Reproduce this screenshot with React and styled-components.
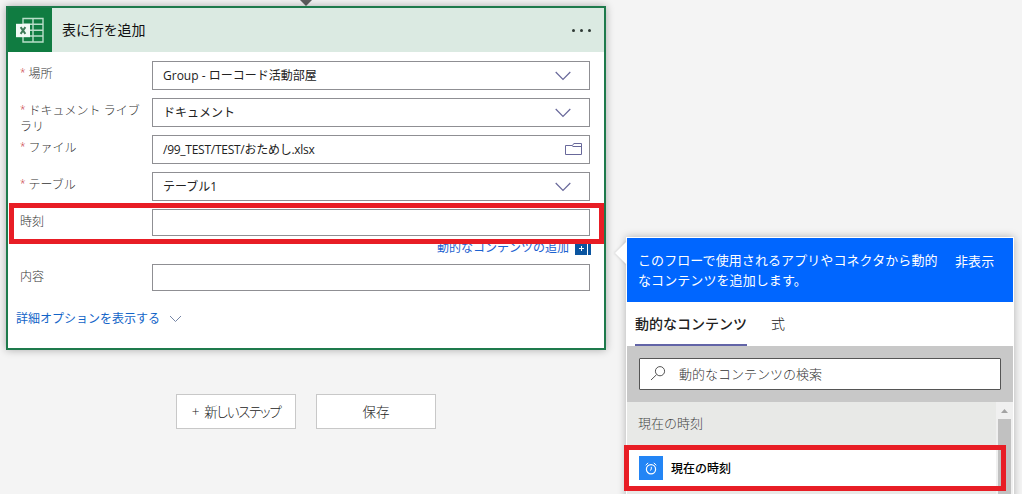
import React from 'react';
import styled, {createGlobalStyle} from 'styled-components';

const App = () => (
	<Page>
		<GlobalStyle />

		<Designer>
			<Connector width="12" height="6" viewBox="0 0 12 6">
				<path d="M0 0h12L6 6z" fill="#5f5f5f" />
			</Connector>

			<Card>
				<CardHeader>
					<ExcelTile>
						<ExcelIcon />
					</ExcelTile>
					<CardTitle>表に行を追加</CardTitle>
					<Dots>
						<Dot />
						<Dot />
						<Dot />
					</Dots>
				</CardHeader>

				<Fields>
					<Field label="場所" required>
						<Value>Group - ローコード活動部屋</Value>
						<Chevron />
					</Field>
					<Field label="ドキュメント ライブラリ" required>
						<Value>ドキュメント</Value>
						<Chevron />
					</Field>
					<Field label="ファイル" required>
						<Value $spacing={-0.26}>/99_TEST/TEST/おためし.xlsx</Value>
						<FolderIcon />
					</Field>
					<Field label="テーブル" required>
						<Value>テーブル1</Value>
						<Chevron />
					</Field>
					<Field label="時刻" highlighted />
					<DynamicLink>
						動的なコンテンツの追加
						<PlusTile>
							<svg width="12" height="12" viewBox="0 0 12 12">
								<path d="M6.5 5v5M4 7.5h5" stroke="#fff" />
							</svg>
						</PlusTile>
						<PlusEdge />
					</DynamicLink>
					<Field label="内容" />
				</Fields>

				<Advanced>
					詳細オプションを表示する
					<svg width="13" height="8" viewBox="0 0 13 8">
						<path d="M1 1l5.5 5.5L12 1" fill="none" stroke="#7585a6" />
					</svg>
				</Advanced>
			</Card>

			<Actions>
				<Action>
					+<ActionText>新しいステップ</ActionText>
				</Action>
				<Action>保存</Action>
			</Actions>
		</Designer>

		<Panel>
			<Callout width="12" height="24" viewBox="0 0 12 24">
				<path d="M12 0v24L0 12z" fill="#fff" />
			</Callout>
			<PanelHeader>
				<PanelText>このフローで使用されるアプリやコネクタから動的なコンテンツを追加します。</PanelText>
				<Hide>非表示</Hide>
			</PanelHeader>
			<Tabs>
				<Tab $active>動的なコンテンツ</Tab>
				<Tab>式</Tab>
			</Tabs>
			<SearchArea>
				<SearchBox>
					<svg width="16" height="16" viewBox="0 0 16 16">
						<path d="M1 14l5.6-5.4" fill="none" stroke="#555" />
						<circle cx="10" cy="5.2" r="4.6" fill="none" stroke="#555" />
					</svg>
					<SearchHint>動的なコンテンツの検索</SearchHint>
				</SearchBox>
			</SearchArea>
			<Results>
				<ResultList>
					<GroupTitle>現在の時刻</GroupTitle>
					<Result>
						<ClockTile>
							<ClockIcon />
						</ClockTile>
						現在の時刻
						<ResultMark />
					</Result>
				</ResultList>
				<Scrollbar>
					<svg width="7" height="4" viewBox="0 0 7 4">
						<path d="M0 4l3.5-4L7 4z" fill="#a3a3a3" />
					</svg>
					<Thumb />
				</Scrollbar>
			</Results>
		</Panel>
	</Page>
);

const Field = ({label, required, highlighted, children}) => (
	<FieldRow>
		<Label>
			{required && <Star>*</Star>}
			{label}
		</Label>
		<Box $short={!children}>{children}</Box>
		{highlighted && <FieldMark />}
	</FieldRow>
);

const Chevron = () => (
	<ChevronSvg width="16" height="10" viewBox="0 0 16 10">
		<path d="M.7 1l7.3 7.5L15.3 1" fill="none" stroke="#68689a" strokeWidth="1.2" />
	</ChevronSvg>
);

const FolderIcon = () => (
	<FolderSvg width="17" height="13" viewBox="0 0 17 13">
		<path
			d="M.5 2.5h7l1.3-2h7.7v11H.5zM7.5 3.5h9"
			fill="none"
			stroke="#68689a"
		/>
	</FolderSvg>
);

const ExcelIcon = () => (
	<svg width="28" height="26" viewBox="0 0 28 26">
		<path
			d="M7 1.5h20v23.5H7zM7 7.3h20M7 13.2h20M7 19h20M17 1.5V25"
			fill="none"
			stroke="#b9dec9"
			strokeWidth="1.4"
		/>
		<path d="M0 6.8h14v13.4H0z" fill="#f1faf5" />
		<path d="M4.6 10.1l4.8 6.8M9.4 10.1l-4.8 6.8" stroke="#3c7a56" strokeWidth="1.9" />
	</svg>
);

const ClockIcon = () => (
	<svg width="12" height="13" viewBox="0 0 12 13">
		<g fill="none" stroke="#fff">
			<circle cx="6" cy="7.2" r="4.6" strokeWidth="1.2" />
			<path d="M.7 3.2L3.2.9M8.8.9l2.5 2.3M6.3 4.8v2.7L5 8.4" />
		</g>
	</svg>
);

export default App;

const GlobalStyle = createGlobalStyle`
	body {
		margin: 0;
		background: #f4f4f4;
		overflow: hidden;
	}
	* {
		box-sizing: border-box;
	}
	svg {
		display: block;
		flex: none;
	}
`;

const Page = styled.div`
	display: flex;
	width: 1022px;
	height: 494px;
	overflow: hidden;
	font-family: 'Open Sans', 'Noto Sans CJK JP', sans-serif;
	font-size: 12px;
	color: #222;
`;

const Designer = styled.div`
	display: flex;
	flex-direction: column;
	width: 606px;
	padding-left: 6px;
`;

const Connector = styled.svg`
	align-self: center;
`;

const Card = styled.div`
	height: 344px;
	border: 2px solid #1e7a4c;
	background: #fff;
	box-shadow: 0 0 8px rgba(0, 0, 0, 0.3);
`;

const CardHeader = styled.div`
	display: flex;
	align-items: center;
	height: 44px;
	background: #dbeae2;
`;

const ExcelTile = styled.div`
	display: flex;
	align-items: center;
	justify-content: center;
	width: 44px;
	height: 44px;
	background: #107c41;
`;

const CardTitle = styled.div`
	flex: 1;
	padding-left: 10px;
	font-size: 14px;
	letter-spacing: -0.1px;
	line-height: 20px;
	color: #111;
`;

const Dots = styled.div`
	display: flex;
	gap: 5px;
	padding-right: 13px;
`;

const Dot = styled.div`
	width: 3px;
	height: 3px;
	border-radius: 50%;
	background: #2f3a35;
`;

const Fields = styled.div`
	padding: 9px 14px 0 12px;
`;

const FieldRow = styled.div`
	position: relative;
	display: flex;
	height: 37px;
`;

const Label = styled.div`
	width: 132px;
	padding: 5px 8px 0 0;
	font-weight: 300;
	line-height: 16px;
	color: #333;
`;

const Star = styled.span`
	margin-right: 3px;
	font-size: 10px;
	line-height: 10px;
	vertical-align: 2px;
	color: #c4262e;
`;

const Box = styled.div`
	display: flex;
	align-items: center;
	width: 438px;
	height: ${p => (p.$short ? 27 : 29)}px;
	padding-left: 10px;
	border: 1px solid #8f8f93;
	background: #fff;
`;

const Value = styled.div`
	flex: 1;
	letter-spacing: ${p => p.$spacing || 0}px;
	line-height: 18px;
	white-space: nowrap;
`;

const ChevronSvg = styled.svg`
	margin-right: 18px;
`;

const FolderSvg = styled.svg`
	margin-right: 7px;
`;

/* red frame drawn over the row being explained */
const FieldMark = styled.div`
	position: absolute;
	top: -6px;
	left: -11px;
	z-index: 1;
	width: 595px;
	height: 41px;
	border: 5px solid #e81d25;
`;

const DynamicLink = styled.div`
	display: flex;
	align-items: center;
	justify-content: flex-end;
	height: 18px;
	margin-right: -1px;
	padding-bottom: 14px;
	line-height: 18px;
	color: #1c62d0;
`;

const PlusTile = styled.div`
	width: 12px;
	height: 14px;
	margin-left: 6px;
	background: #0a55a0;
`;

const PlusEdge = styled.div`
	width: 3px;
	height: 14px;
	margin-left: 1px;
	background: #0a55a0;
`;

const Advanced = styled.div`
	display: flex;
	align-items: center;
	gap: 9px;
	padding: 9px 0 0 8px;
	line-height: 18px;
	color: #1264c8;
`;

const Actions = styled.div`
	display: flex;
	gap: 20px;
	padding: 44px 0 0 170px;
`;

const Action = styled.div`
	display: flex;
	align-items: center;
	justify-content: center;
	width: 120px;
	height: 35px;
	padding-bottom: 2px;
	border: 1px solid #c8c8c8;
	background: #fff;
	font-size: 13.5px;
	font-weight: 300;
`;

const ActionText = styled.span`
	margin-left: 5px;
	font-feature-settings: 'palt';
	letter-spacing: -1.3px;
`;

const Panel = styled.div`
	position: relative;
	display: flex;
	flex-direction: column;
	width: 388px;
	height: 270px;
	margin: 237px 0 0 20px;
	border: 1px solid #fff;
	background: #fff;
	box-shadow: 0 0 8px rgba(0, 0, 0, 0.28);
	font-size: 13px;
`;

const Callout = styled.svg`
	position: absolute;
	top: 3px;
	left: -12px;
	filter: drop-shadow(-1px 0 1px rgba(0, 0, 0, 0.12));
`;

const PanelHeader = styled.div`
	display: flex;
	height: 64px;
	padding: 12px 0 0 11px;
	background: #0066ff;
	line-height: 20px;
	color: #fff;
`;

const PanelText = styled.div`
	width: 302px;
	letter-spacing: 0.08px;
`;

const Hide = styled.div`
	margin-left: 15px;
	padding-top: 1px;
	letter-spacing: 0.1px;
`;

const Tabs = styled.div`
	display: flex;
	gap: 24px;
	height: 44px;
	padding-left: 8px;
`;

const Tab = styled.div`
	padding-top: 12px;
	border-bottom: 2px solid ${p => (p.$active ? '#6264a7' : 'transparent')};
	font-size: 14px;
	font-weight: ${p => (p.$active ? 500 : 300)};
	line-height: 20px;
`;

const SearchArea = styled.div`
	height: 56px;
	padding: 12px;
	background: #c8c8c8;
`;

const SearchBox = styled.div`
	display: flex;
	align-items: center;
	gap: 13px;
	height: 32px;
	padding-left: 10px;
	border: 1px solid #555;
	border-radius: 1px;
	background: #fff;
	font-weight: 300;
	color: #333;
`;

const SearchHint = styled.span`
	padding-bottom: 2px;
`;

const Results = styled.div`
	display: flex;
	flex: 1;
	background: #e8e9e7;
`;

const ResultList = styled.div`
	width: 369px;
`;

const GroupTitle = styled.div`
	height: 44px;
	padding: 11px;
	font-weight: 300;
	line-height: 20px;
	color: #444;
`;

const Result = styled.div`
	position: relative;
	display: flex;
	align-items: center;
	gap: 8px;
	height: 44px;
	padding-left: 12px;
	background: #fff;
	font-size: 12px;
	font-weight: 500;
	color: #000;
`;

const ResultMark = styled.div`
	position: absolute;
	top: -1px;
	left: -3px;
	width: 382px;
	height: 46px;
	border: 5px solid #e81d25;
`;

const ClockTile = styled.div`
	display: flex;
	align-items: center;
	justify-content: center;
	width: 24px;
	height: 24px;
	background: #2385f5;
`;

const Scrollbar = styled.div`
	display: flex;
	flex-direction: column;
	align-items: center;
	width: 17px;
	padding-top: 7px;
	background: #f0f0f0;
`;

const Thumb = styled.div`
	flex: 1;
	width: 13px;
	margin-top: 6px;
	background: #c1c1c1;
`;
